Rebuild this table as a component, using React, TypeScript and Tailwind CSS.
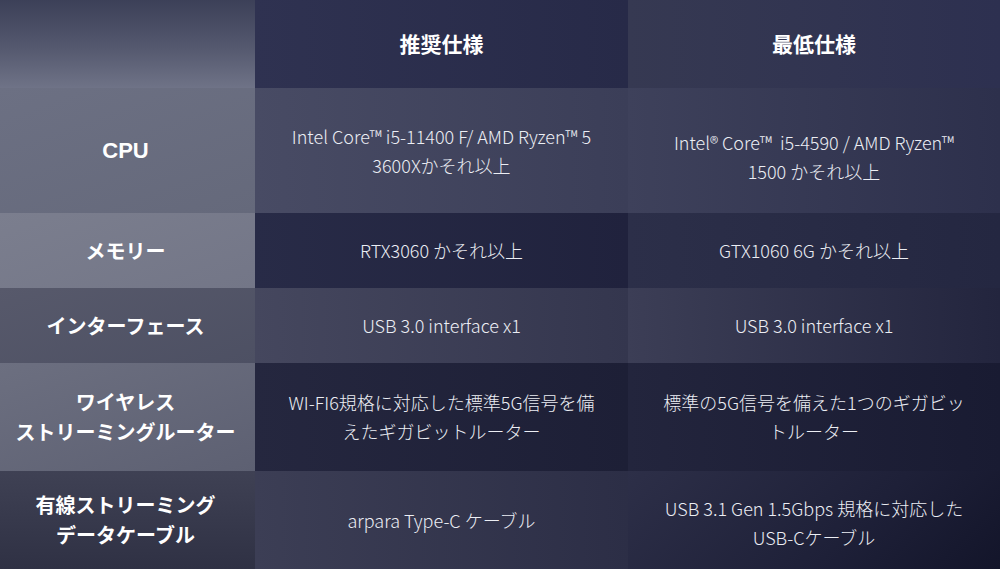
import React from "react";

const body = "font-['Noto_Sans_CJK_JP','Noto_Sans',sans-serif]";

type Row = {
  label: React.ReactNode;
  labelCls: string;
  a: React.ReactNode;
  aCls: string;
  b: React.ReactNode;
  bCls: string;
  bInner?: string;
};

const rows: Row[] = [
  {
    label: <span className="font-['Liberation_Sans',Arial,sans-serif] text-[22px] font-bold">CPU</span>,
    labelCls: "bg-[linear-gradient(160deg,#6c7083,#65697b)]",
    a: (
      <>
        Intel Core™ i5-11400 F/ AMD Ryzen™ 5
        <br />
        3600Xかそれ以上
      </>
    ),
    aCls: "bg-[linear-gradient(to_right,#484b64,#3b3e58)]",
    b: (
      <>
        Intel® Core™&nbsp; i5-4590 / AMD Ryzen™
        <br />
        1500 かそれ以上
      </>
    ),
    bCls: "bg-[linear-gradient(to_right,#3e415b,#2d304c)]",
    bInner: "mt-[12px]",
  },
  {
    label: "メモリー",
    labelCls: "bg-[linear-gradient(160deg,#7b7e8e,#737687)]",
    a: "RTX3060 かそれ以上",
    aCls: "bg-[linear-gradient(to_right,#282b47,#20223d)]",
    b: "GTX1060 6G かそれ以上",
    bCls: "bg-[linear-gradient(to_right,#2c2f49,#242741)]",
  },
  {
    label: "インターフェース",
    labelCls: "bg-[linear-gradient(160deg,#57596b,#4d5063)]",
    a: "USB 3.0 interface x1",
    aCls: "bg-[linear-gradient(to_right,#45475e,#34364e)]",
    b: "USB 3.0 interface x1",
    bCls: "bg-[linear-gradient(to_right,#3c3e56,#23253e)]",
  },
  {
    label: (
      <>
        ワイヤレス
        <br />
        ストリーミングルーター
      </>
    ),
    labelCls: "bg-[linear-gradient(160deg,#6c6f80,#5d6072)]",
    a: (
      <>
        WI-FI6規格に対応した標準5G信号を備
        <br />
        えたギガビットルーター
      </>
    ),
    aCls: "bg-[linear-gradient(to_right,#25273f,#1d1f36)]",
    b: (
      <>
        標準の5G信号を備えた1つのギガビッ
        <br />
        トルーター
      </>
    ),
    bCls: "bg-[linear-gradient(to_right,#23253d,#191b32)]",
  },
  {
    label: (
      <>
        有線ストリーミング
        <br />
        データケーブル
      </>
    ),
    labelCls: "bg-[linear-gradient(to_bottom,#3f4154,#2f3144)]",
    a: "arpara Type-C ケーブル",
    aCls: "bg-[linear-gradient(to_right,#3c3e55,#2c2e46)]",
    b: (
      <>
        USB 3.1 Gen 1.5Gbps 規格に対応した
        <br />
        USB-Cケーブル
      </>
    ),
    bCls: "bg-[linear-gradient(135deg,#2d2f48,#1e2038_60%,#13152a)]",
    bInner: "mt-[6px]",
  },
];

export default function App() {
  return (
    <div className="w-[1000px] h-[569px] overflow-hidden bg-[#2a2c45]">
      <div className="grid grid-cols-[255px_373px_372px] grid-rows-[88px_125px_75px_75px_108px_98px] w-full h-full">
        <div className="bg-[linear-gradient(to_bottom,#3c4058,#55596f_55%,#6f7387)]" />
        <div className={`flex items-center justify-center bg-[linear-gradient(to_right,#2f3251,#272a48)] text-white text-[21px] font-bold ${body}`}>
          推奨仕様
        </div>
        <div className={`flex items-center justify-center bg-[linear-gradient(to_right,#363952,#2d3050)] text-white text-[21px] font-bold ${body}`}>
          最低仕様
        </div>
        {rows.map((r, i) => (
          <React.Fragment key={i}>
            <div
              className={`flex items-center justify-center text-center text-white font-bold text-[20px] leading-[30px] pr-[4px] ${body} ${r.labelCls}`}
            >
              <div>{r.label}</div>
            </div>
            <div
              className={`flex items-center justify-center text-center text-[#eceef4] text-[18px] leading-[29px] font-light ${body} ${r.aCls}`}
            >
              <div>{r.a}</div>
            </div>
            <div
              className={`flex items-center justify-center text-center text-[#eceef4] text-[18px] leading-[29px] font-light ${body} ${r.bCls}`}
            >
              <div className={r.bInner ?? ""}>{r.b}</div>
            </div>
          </React.Fragment>
        ))}
      </div>
    </div>
  );
}
